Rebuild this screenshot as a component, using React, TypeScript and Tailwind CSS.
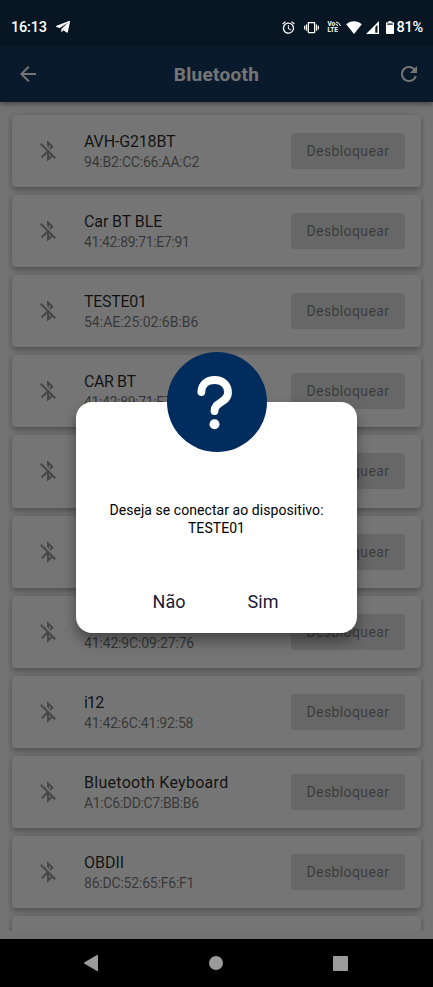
import { FaTelegramPlane } from "react-icons/fa"
import {
  MdAlarm,
  MdArrowBack,
  MdBluetoothDisabled,
  MdRefresh,
  MdVibration,
} from "react-icons/md"

type Device = {
  name: string
  address: string
  nameClass: string
  addressClass: string
}

const devices: Device[] = [
  { name: "AVH-G218BT", address: "94:B2:CC:66:AA:C2", nameClass: "tracking-[-0.15px]", addressClass: "tracking-[-0.2px]" },
  { name: "Car BT BLE", address: "41:42:89:71:E7:91", nameClass: "tracking-[-0.1px]", addressClass: "tracking-[-0.35px]" },
  { name: "TESTE01", address: "54:AE:25:02:6B:B6", nameClass: "tracking-[-0.3px]", addressClass: "tracking-[0px]" },
  { name: "CAR BT", address: "41:42:89:71:E7:91", nameClass: "tracking-[-0.4px]", addressClass: "tracking-[-0.35px]" },
  { name: "CAR BT", address: "41:42:89:71:E7:91", nameClass: "tracking-[-0.4px]", addressClass: "tracking-[-0.35px]" },
  { name: "CAR BT", address: "41:42:89:71:E7:91", nameClass: "tracking-[-0.4px]", addressClass: "tracking-[-0.35px]" },
  { name: "CAR BT", address: "41:42:9C:09:27:76", nameClass: "tracking-[-0.4px]", addressClass: "tracking-[-0.15px]" },
  { name: "i12", address: "41:42:6C:41:92:58", nameClass: "tracking-[-0.8px]", addressClass: "tracking-[-0.2px]" },
  { name: "Bluetooth Keyboard", address: "A1:C6:DD:C7:BB:B6", nameClass: "tracking-[0.28px]", addressClass: "tracking-[-0.33px]" },
  { name: "OBDII", address: "86:DC:52:65:F6:F1", nameClass: "tracking-[0px]", addressClass: "tracking-[-0.2px]" },
]

const StatusBar = () => (
  <div className="absolute inset-x-0 top-0 flex h-[46px] items-center pt-2 pl-[11px] pr-[10px] text-white">
    <span className="pt-[3px] text-[14.5px] font-medium leading-none tracking-[-0.2px]">16:13</span>
    <FaTelegramPlane className="ml-[8px] size-[16px]" />
    <div className="ml-auto flex items-center">
      <MdAlarm className="size-[15px]" />
      <MdVibration className="ml-[8px] size-[15px]" />
      <div className="ml-[8px] flex w-[14px] flex-col text-[6.5px] font-bold leading-[6.5px]">
        <span className="flex">
          Vo
          <svg viewBox="0 0 6 6" className="size-[6px]" fill="none" stroke="currentColor" strokeWidth="1">
            <path d="M.5 3q2 0 2 2M1 1q3.500.4 4.500 4" />
          </svg>
        </span>
        <span>LTE</span>
      </div>
      <svg viewBox="0 0 16 13" className="ml-[5px] h-[13px] w-[16px]" fill="currentColor">
        <path d="M8 13 .2 3.300C4.500-.8 11.500-.8 15.800 3.300Z" />
      </svg>
      <svg viewBox="0 0 13 13" className="ml-[4px] size-[13px]" fill="currentColor">
        <path fillRule="evenodd" d="M0 13 13 0v13ZM9.300 6v5.700h2.200V3.800Z" />
      </svg>
      <svg viewBox="0 0 8 13" className="ml-[7px] h-[13px] w-[8px]" fill="currentColor">
        <path fillRule="evenodd" d="M2.500 0h3v1.200H7q1 0 1 1V12q0 1-1 1H1q-1 0-1-1V2.200q0-1 1-1h1.500ZM1.200 2.400v1.300h5.600V2.400Z" />
      </svg>
      <span className="ml-[2px] pt-[3px] text-[14.5px] font-medium leading-none tracking-[-0.2px]">81%</span>
    </div>
  </div>
)

const DeviceCard = ({ name, address, nameClass, addressClass }: Device) => (
  <div className="flex h-[72.200px] shrink-0 items-center rounded-[4px] bg-white pl-6 pr-4 shadow-[0_3px_5px_rgba(0,0,0,0.2),0_1px_9px_rgba(0,0,0,0.16)]">
    <MdBluetoothDisabled className="size-6 text-black/40" />
    <div className="ml-6 flex flex-1 flex-col whitespace-nowrap pt-px">
      <p className={`text-[16px] leading-[21px] text-black/85 ${nameClass}`}>{name}</p>
      <p className={`text-[14px] leading-[20px] text-black/55 ${addressClass}`}>{address}</p>
    </div>
    <button className="flex h-9 w-[114px] items-center justify-center rounded-[4px] bg-black/12 pt-px text-[14px] tracking-[0.4px] text-black/45">
      Desbloquear
    </button>
  </div>
)

const ConfirmDialog = () => (
  <div className="absolute left-[76px] top-[402px] flex h-[231px] w-[281px] flex-col items-center rounded-[16px] bg-white shadow-[0_8px_14px_rgba(0,0,0,0.4)]">
    <div className="-mt-[50px] size-[100px] shrink-0 rounded-full bg-[#002d5d]">
      <svg viewBox="0 0 100 100" className="size-full" fill="none">
        <path
          d="M34.300 40C34.600 32 40.500 28 47.500 28C55.500 28 61 33 61 40.500C61 51 47.500 49.500 47.500 59"
          stroke="white"
          strokeWidth="7.800"
          strokeLinecap="round"
        />
        <circle cx="47.500" cy="72.300" r="5" fill="white" />
      </svg>
    </div>
    <p className="mt-[50px] text-center text-[14px] leading-[17.500px] tracking-[0.06px] text-black">
      Deseja se conectar ao dispositivo:
      <br />
      TESTE01
    </p>
    <div className="mt-[53px] flex w-full text-[18px] leading-[24px] text-[#1c1b33]">
      <button className="ml-[46px] w-[94px]">Não</button>
      <button className="w-[94px]">Sim</button>
    </div>
  </div>
)

export default function App() {
  return (
    <div className="relative flex h-[987px] w-[433px] flex-col overflow-hidden bg-black font-['Roboto',sans-serif]">
      <div className="relative flex h-[939px] flex-col bg-[#fafafa]">
        <div className="h-[46px] shrink-0 bg-[#10304a]" />
        <header className="z-10 flex h-[56px] shrink-0 items-center justify-between bg-[#173a62] pl-4 pr-3 text-white shadow-[0_2px_5px_rgba(0,0,0,0.4)]">
          <MdArrowBack className="size-6" />
          <h1 className="pr-1 pt-[3px] text-[19px] font-bold tracking-[0.3px]">Bluetooth</h1>
          <MdRefresh className="size-6" />
        </header>
        <main className="mx-[8px] mb-[8px] flex min-h-0 flex-1 flex-col gap-[8px] overflow-hidden px-[4px] pt-[12.600px]">
          {devices.map((device, i) => (
            <DeviceCard key={i} {...device} />
          ))}
          <div className="h-[72px] shrink-0 rounded-[4px] bg-white shadow-[0_3px_5px_rgba(0,0,0,0.2),0_1px_9px_rgba(0,0,0,0.16)]" />
        </main>
        <div className="absolute inset-0 z-20 bg-black/54" />
      </div>
      <nav className="flex h-[48px] items-center justify-between pl-[84px] pr-[85px] text-[#9b9b9b]">
        <svg viewBox="0 0 14 16" className="h-[16px] w-[14px]" fill="currentColor">
          <path d="M13 0q1-.3 1 1v14q0 1.300-1 1L.5 8.800Q-.5 8 .5 7.200Z" />
        </svg>
        <div className="size-[14px] rounded-full bg-[#9b9b9b]" />
        <div className="size-[15px] rounded-[1px] bg-[#9b9b9b]" />
      </nav>
      <div className="absolute inset-0 z-30">
        <StatusBar />
        <ConfirmDialog />
      </div>
    </div>
  )
}
